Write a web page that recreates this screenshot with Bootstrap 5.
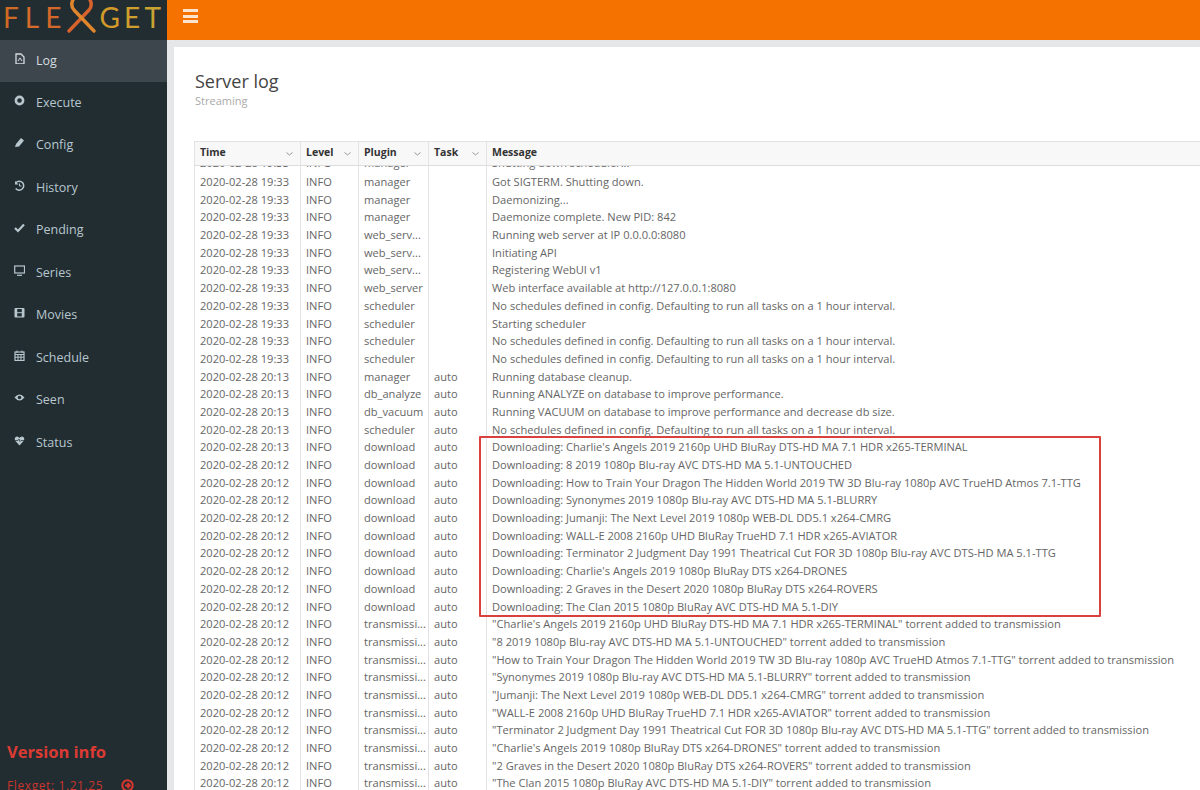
<!DOCTYPE html>
<html lang="en">
<head>
  <meta charset="UTF-8">
  <meta name="viewport" content="width=device-width, initial-scale=1.0">
  <title>Flexget - Server log</title>
  <link href="https://cdn.jsdelivr.net/npm/bootstrap@5.3.3/dist/css/bootstrap.min.css" rel="stylesheet">
  <style>
    html, body { height: 100%; overflow: hidden; }
    body { font-family: "Open Sans", "Liberation Sans", sans-serif; background: #e6e7e9; color: #555; }
    .app-side { width: 167px; background: #222d32; height: 790px; }
    .logo-box { height: 40px; padding-left: 3px; font-family: Lato, "Liberation Sans", sans-serif; font-size: 28px; line-height: 35px; overflow: hidden; }
    .logo-box span { letter-spacing: 6px; }
    .logo-box .logo-end span { letter-spacing: 4.2px; }
    .logo-box svg { flex: none; margin-right: 3px; }
    .side-link { height: 42.5px; padding-left: 14px; color: #b8c7ce; font-size: 12.5px; gap: 11px; text-decoration: none; }
    .side-link.current { background: #3c464c; color: #d6dde0; height: 42px; }
    .side-link svg { width: 11px; height: 11px; margin-top: -6px; flex: none; }
    .version-title { color: #dc3b33; font-size: 16.500px; font-weight: 700; padding: 0 0 0 7px; margin-top: auto; margin-bottom: 15px; line-height: 22px; }
    .version-line { color: #c9352f; font-size: 12px; padding-left: 7px; height: 15px; margin-bottom: -3px; gap: 18px; letter-spacing: .6px; white-space: nowrap; }
    .top-strip { height: 40px; background: #f57100; padding-left: 16px; }
    .menu-bars { width: 15px; height: 14px; margin-top: -8px; gap: 2.5px; }
    .menu-bars i { display: block; height: 3px; background: #fbe3cd; }
    .log-panel { background: #fff; margin: 7px 0 0 7px; height: 743px; padding: 0 0 0 20px; overflow: hidden; position: relative; }
    .log-panel h1 { font-size: 18px; font-weight: 400; color: #444; margin: 24px 0 0 1px; line-height: 20px; }
    .log-sub { font-size: 11px; color: #aaa; margin: 3px 0 33px 1px; line-height: 14px; }
    .log-table { table-layout: fixed; width: 1100px; margin: 0; font-size: 11.1px; color: #666; border-collapse: separate; border-spacing: 0; }
    .log-table th, .log-table td { padding: 0 5px; border: 0; border-left: 1px solid #e3e3e3; white-space: nowrap; overflow: hidden; background: #fff; box-shadow: none; color: #666; }
    .log-table thead th { height: 25px; padding-bottom: 4px; background: #f8f8f8; border-top: 1px solid #e3e3e3; border-bottom: 1px solid #ddd; font-size: 10.5px; color: #333; font-weight: 700; position: relative; }
    .log-table tbody td { height: 17.68px; line-height: 17.68px; }
    .log-table tbody tr.cut-row td { height: 7px; line-height: 7px; }
    .cut-row div { height: 7px; overflow: hidden; margin: 0; }
    .cut-row div b { display: block; font-weight: 400; margin-top: -12px; line-height: 17.68px; }
    .sort-mark { position: absolute; right: 7px; top: 10px; width: 7px; height: 4px; }
    .hi-box { position: absolute; left: 305px; top: 389px; width: 622px; height: 181px; border: 2px solid #d8413e; border-radius: 1px; pointer-events: none; }
  </style>
</head>
<body>
  <div class="d-flex">
    <!-- menu de gauche -->
    <aside class="app-side d-flex flex-column flex-shrink-0">
      <div class="logo-box d-flex">
        <span style="color:#cf6a24">F</span><span style="color:#d96a2c">L</span><span style="color:#d4682a">E</span>
        <svg width="29" height="40" viewBox="0 0 29 40" fill="none" stroke-width="3.4" stroke-linecap="round">
          <path d="M2 31 L22 10 Q27 4 21 -3" stroke="#d8622c"/>
          <path d="M27 31 L7 10 Q2 4 8 -3" stroke="#e0862c"/>
        </svg>
        <div class="logo-end d-flex"><span style="color:#d39a2a">G</span><span style="color:#cf9f2e">E</span><span style="color:#c9a332">T</span></div>
      </div>
      <nav id="sideNav" class="d-flex flex-column"></nav>
      <div class="version-title">Version info</div>
      <div class="version-line d-flex align-items-center">
        <span>Flexget: 1.21.25</span>
        <svg width="13" height="13" viewBox="0 0 13 13" fill="none" stroke="#d8362e" stroke-width="2"><circle cx="6.5" cy="6.5" r="5.2"/><path d="M4 6.5h4M6.5 4l2.2 2.5L6.500 9"/></svg>
      </div>
    </aside>

    <div class="flex-grow-1 overflow-hidden">
      <header class="top-strip d-flex align-items-center">
        <div class="menu-bars d-flex flex-column"><i></i><i></i><i></i></div>
      </header>
      <main class="log-panel">
        <h1>Server log</h1>
        <div class="log-sub">Streaming</div>
        <table class="table log-table">
          <colgroup><col style="width:106px"><col style="width:58px"><col style="width:70px"><col style="width:58px"><col></colgroup>
          <thead><tr id="headRow"></tr></thead>
          <tbody id="logRows"></tbody>
        </table>
        <div class="hi-box"></div>
      </main>
    </div>
  </div>

  <script>
    const icons = {
      Log: '<path d="M2 1h5l3 3v7H2z" fill="none" stroke="currentColor" stroke-width="1.300"/><path d="M4 8l2-3 2 3" fill="none" stroke="currentColor"/>',
      Execute: '<circle cx="5.500" cy="5.500" r="3.600" fill="none" stroke="currentColor" stroke-width="2.600"/>',
      Config: '<path d="M1 10l1-3 5-6 3 2.500-5 6z" fill="currentColor"/>',
      History: '<path d="M2 2.500a4.500 4.500 0 1 1-.3 6" fill="none" stroke="currentColor" stroke-width="1.500"/><path d="M1 1v3.500h3.500z" fill="currentColor"/><path d="M5.500 3.500v2.500h2" fill="none" stroke="currentColor"/>',
      Pending: '<path d="M1 6l3 3 6-6.500" fill="none" stroke="currentColor" stroke-width="2.200"/>',
      Series: '<rect x=".7" y="1" width="9.800" height="7" fill="none" stroke="currentColor" stroke-width="1.200"/><path d="M3 10.300h5" stroke="currentColor" stroke-width="1.200"/>',
      Movies: '<rect x=".5" y="1" width="10" height="9.500" rx="1" fill="currentColor"/><rect x="3.200" y="2" width="4.600" height="3.200" fill="#222d32"/><rect x="3.200" y="6.200" width="4.600" height="3.200" fill="#222d32"/>',
      Schedule: '<rect x="1" y="2" width="9" height="8.500" fill="none" stroke="currentColor" stroke-width="1.200"/><path d="M1 4.500h9M3 .5v2.500M8 .5v2.500M1 7.200h9M4 4.500v6M7 4.500v6" stroke="currentColor"/>',
      Seen: '<path d="M.5 5.500Q5.500-.5 10.500 5.500 5.500 11.500.5 5.500z" fill="currentColor"/><circle cx="5.500" cy="5.500" r="1.800" fill="#222d32"/>',
      Status: '<path d="M5.500 10.500L1 5.500Q0 2 3 1.500 4.800 1.500 5.500 3 6.200 1.500 8 1.500 11 2 10 5.500z" fill="currentColor"/><path d="M1 5.500h3l1-1.500 1 2.500 1-1h3" fill="none" stroke="#222d32" stroke-width=".7"/>'
    };

    document.getElementById('sideNav').innerHTML = Object.keys(icons).map((name, i) => `
      <a href="#" class="side-link d-flex align-items-center ${i === 0 ? 'current' : ''}">
        <svg viewBox="0 0 11 11">${icons[name]}</svg><span>${name}</span>
      </a>`).join('');

    const headers = ['Time', 'Level', 'Plugin', 'Task', 'Message'];
    document.getElementById('headRow').innerHTML = headers.map(h => `
      <th>${h}<svg class="sort-mark" viewBox="0 0 7 4" fill="none" stroke="#999"><path d="M.5.500l3 2.500 3-2.500"/></svg></th>`).join('');

    const noSchedule = 'No schedules defined in config. Defaulting to run all tasks on a 1 hour interval.';
    const releases = [
      "Charlie's Angels 2019 2160p UHD BluRay DTS-HD MA 7.1 HDR x265-TERMINAL",
      '8 2019 1080p Blu-ray AVC DTS-HD MA 5.1-UNTOUCHED',
      'How to Train Your Dragon The Hidden World 2019 TW 3D Blu-ray 1080p AVC TrueHD Atmos 7.1-TTG',
      'Synonymes 2019 1080p Blu-ray AVC DTS-HD MA 5.1-BLURRY',
      'Jumanji: The Next Level 2019 1080p WEB-DL DD5.1 x264-CMRG',
      'WALL-E 2008 2160p UHD BluRay TrueHD 7.1 HDR x265-AVIATOR',
      'Terminator 2 Judgment Day 1991 Theatrical Cut FOR 3D 1080p Blu-ray AVC DTS-HD MA 5.1-TTG',
      "Charlie's Angels 2019 1080p BluRay DTS x264-DRONES",
      '2 Graves in the Desert 2020 1080p BluRay DTS x264-ROVERS',
      'The Clan 2015 1080p BluRay AVC DTS-HD MA 5.1-DIY'
    ];

    const t1 = '2020-02-28 19:33', t2 = '2020-02-28 20:13', t3 = '2020-02-28 20:12';
    const rows = [
      [t1, 'manager', '', 'Got SIGTERM. Shutting down.'],
      [t1, 'manager', '', 'Daemonizing...'],
      [t1, 'manager', '', 'Daemonize complete. New PID: 842'],
      [t1, 'web_serv...', '', 'Running web server at IP 0.0.0.0:8080'],
      [t1, 'web_serv...', '', 'Initiating API'],
      [t1, 'web_serv...', '', 'Registering WebUI v1'],
      [t1, 'web_server', '', 'Web interface available at http://127.0.0.1:8080'],
      [t1, 'scheduler', '', noSchedule],
      [t1, 'scheduler', '', 'Starting scheduler'],
      [t1, 'scheduler', '', noSchedule],
      [t1, 'scheduler', '', noSchedule],
      [t2, 'manager', 'auto', 'Running database cleanup.'],
      [t2, 'db_analyze', 'auto', 'Running ANALYZE on database to improve performance.'],
      [t2, 'db_vacuum', 'auto', 'Running VACUUM on database to improve performance and decrease db size.'],
      [t2, 'scheduler', 'auto', noSchedule]
    ];
    releases.forEach((r, i) => rows.push([i === 0 ? t2 : t3, 'download', 'auto', 'Downloading: ' + r]));
    releases.forEach(r => rows.push([t3, 'transmissi...', 'auto', `"${r}" torrent added to transmission`]));

    const cutCell = txt => `<td><div><b>${txt}</b></div></td>`;
    let html = `<tr class="cut-row">${cutCell(t1)}${cutCell('INFO')}${cutCell('manager')}${cutCell('')}${cutCell('Shutting down scheduler...')}</tr>`;
    rows.forEach(r => {
      html += `<tr><td>${r[0]}</td><td>INFO</td><td>${r[1]}</td><td>${r[2]}</td><td>${r[3]}</td></tr>`;
    });
    document.getElementById('logRows').innerHTML = html;
  </script>

  <script src="https://cdn.jsdelivr.net/npm/bootstrap@5.3.3/dist/js/bootstrap.bundle.min.js"></script>
</body>
</html>
